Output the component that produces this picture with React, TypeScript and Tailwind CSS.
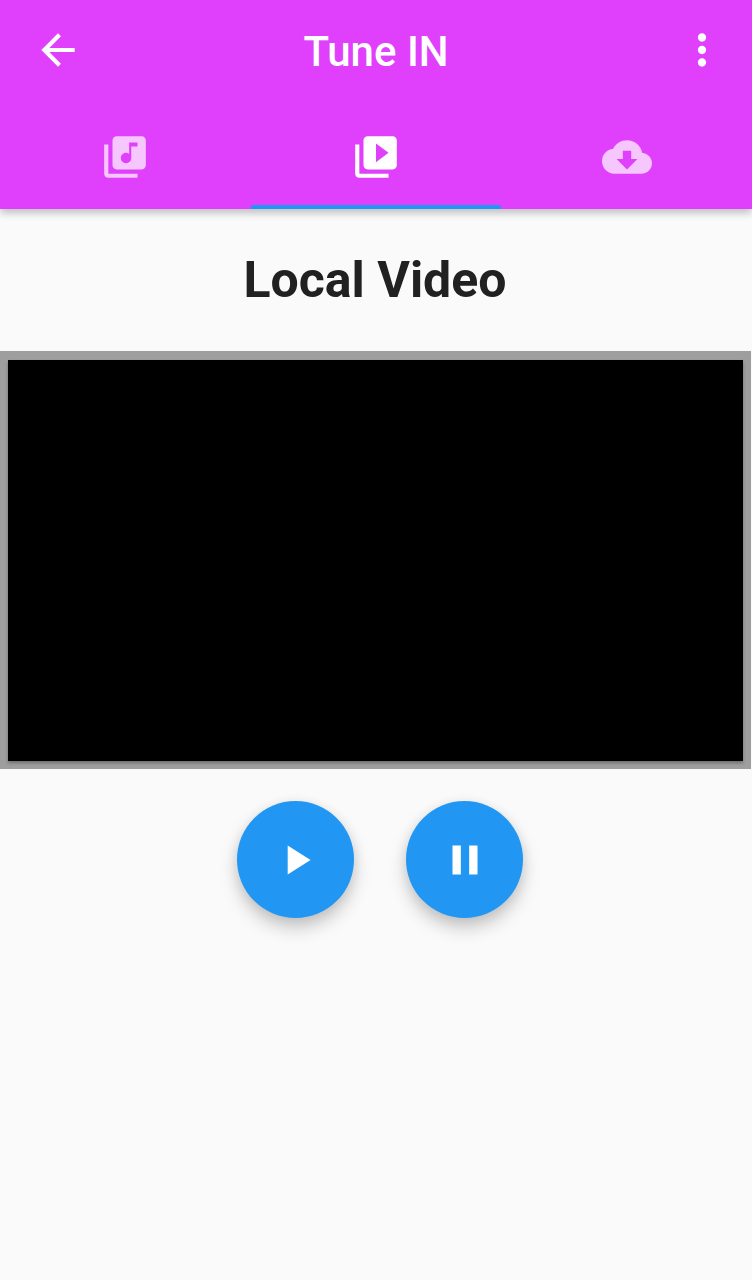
import { useState, type ReactNode } from "react";

function Icon({ path }: { path: string }) {
  return (
    <svg viewBox="0 0 24 24" className="size-[50px] fill-current" aria-hidden="true">
      <path d={path} />
    </svg>
  );
}

const icons = {
  back: "M20 11H7.83l5.59-5.59L12 4l-8 8 8 8 1.41-1.41L7.83 13H20v-2z",
  more: "M12 8c1.1 0 2-.9 2-2s-.9-2-2-2-2 .9-2 2 .9 2 2 2zm0 2c-1.1 0-2 .9-2 2s.9 2 2 2 2-.9 2-2-.9-2-2-2zm0 6c-1.1 0-2 .9-2 2s.9 2 2 2 2-.9 2-2-.9-2-2-2z",
  music:
    "M20 2H8c-1.1 0-2 .9-2 2v12c0 1.1.9 2 2 2h12c1.1 0 2-.9 2-2V4c0-1.1-.9-2-2-2zm-2 5h-3v5.5c0 1.38-1.12 2.5-2.5 2.5S10 13.88 10 12.5s1.12-2.5 2.5-2.5c.57 0 1.08.19 1.5.51V5h4v2zM4 6H2v14c0 1.1.9 2 2 2h14v-2H4V6z",
  video:
    "M4 6H2v14c0 1.1.9 2 2 2h14v-2H4V6zm16-4H8c-1.1 0-2 .9-2 2v12c0 1.1.9 2 2 2h12c1.1 0 2-.9 2-2V4c0-1.1-.9-2-2-2zm-8 12.5v-9l6 4.5-6 4.5z",
  cloud:
    "M19.35 10.04C18.67 6.59 15.64 4 12 4 9.11 4 6.6 5.64 5.35 8.04 2.34 8.36 0 10.91 0 14c0 3.31 2.69 6 6 6h13c2.76 0 5-2.24 5-5 0-2.64-2.05-4.78-4.65-4.96zM17 13l-5 5-5-5h3V9h4v4h3z",
  play: "M8 5v14l11-7z",
  pause: "M6 19h4V5H6v14zm8-14v14h4V5h-4z",
};

const tabs = [
  { label: "Music", path: icons.music },
  { label: "Video", path: icons.video },
  { label: "Downloads", path: icons.cloud },
];

function RoundButton({ label, children }: { label: string; children: ReactNode }) {
  return (
    <button
      type="button"
      aria-label={label}
      className="flex size-[117px] items-center justify-center rounded-full bg-[#2196f3] text-white shadow-[0_10px_18px_rgba(0,0,0,0.20),0_2px_12px_rgba(0,0,0,0.08)]"
    >
      {children}
    </button>
  );
}

export default function App() {
  const [active, setActive] = useState(1);

  return (
    <div className="min-h-screen bg-[#fafafa] font-[Roboto,sans-serif]">
      <header className="bg-[#e040fb] text-white shadow-[0_4px_8px_rgba(0,0,0,0.24)]">
        <div className="grid h-[100px] grid-cols-[1fr_auto_1fr] items-center pr-[25px] pl-[33px]">
          <button type="button" aria-label="Back" className="justify-self-start">
            <Icon path={icons.back} />
          </button>
          <h1 className="pt-1 pr-2 text-[42px] leading-[48px] font-medium">Tune IN</h1>
          <button type="button" aria-label="More options" className="justify-self-end">
            <Icon path={icons.more} />
          </button>
        </div>
        <nav role="tablist" className="grid grid-cols-3 pt-2">
          {tabs.map((tab, i) => (
            <button
              key={tab.label}
              type="button"
              role="tab"
              aria-label={tab.label}
              aria-selected={i === active}
              onClick={() => setActive(i)}
              className="flex flex-col items-center pt-6"
            >
              <span className={i === active ? "text-white" : "text-white/70"}>
                <Icon path={tab.path} />
              </span>
              <span
                className={
                  i === active
                    ? "mt-[23px] h-1 w-full rounded-t-xs bg-[#2196f3]"
                    : "mt-[23px] h-1 w-full"
                }
              />
            </button>
          ))}
        </nav>
      </header>

      <main>
        <h2 className="pt-[41px] pr-0.5 pb-[41px] text-center text-[50px] leading-[60px] font-bold text-[#212121]">
          Local Video
        </h2>
        <div className="mr-px bg-[#9e9e9e] p-2 pt-[9px]">
          <div className="aspect-[735/401] bg-black shadow-[0_2px_3px_rgba(0,0,0,0.3)]" />
        </div>
        <div className="flex justify-center gap-[52px] pt-8 pl-2">
          <RoundButton label="Play">
            <Icon path={icons.play} />
          </RoundButton>
          <RoundButton label="Pause">
            <Icon path={icons.pause} />
          </RoundButton>
        </div>
      </main>
    </div>
  );
}
